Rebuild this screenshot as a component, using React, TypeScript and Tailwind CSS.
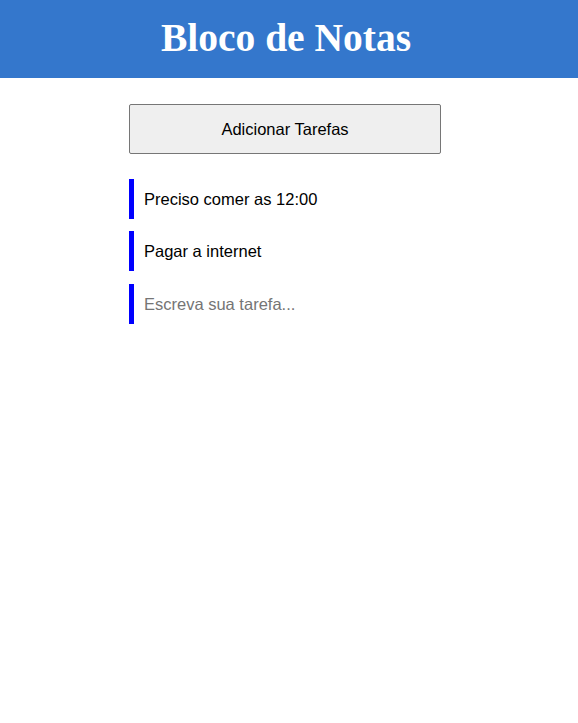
import { useState } from "react";

const tasks = ["Preciso comer as 12:00", "Pagar a internet"];

export default function App() {
    const [text, setText] = useState("");

    return <div className="min-h-screen bg-white font-['Liberation_Sans',Arial,sans-serif]">
        <header className="h-[78px] bg-[#3477cc] flex items-center justify-center">
            <h1 className="text-[39.5px] leading-none font-bold text-white font-['Liberation_Serif','Times_New_Roman',serif] -translate-x-[3px]">
                Bloco de Notas
            </h1>
        </header>
        <main className="ml-[129px] w-[312px] pt-[26px] flex flex-col">
            <button className="h-[50px] w-full bg-[#efefef] border border-[#767676] rounded-[2px] text-[16.5px] text-black">
                Adicionar Tarefas
            </button>
            <div className="mt-[25px] flex flex-col">
                {tasks.map((t) => <div key={t} className="h-[40px] mb-[12px] border-l-[5px] border-[#0000ff] pl-[10px] flex items-center text-[16.5px] text-black">
                    {t}
                </div>)}
                <input
                    value={text}
                    onChange={(e) => setText(e.target.value)}
                    placeholder="Escreva sua tarefa..."
                    className="mt-px h-[40px] border-l-[5px] border-[#0000ff] pl-[10px] text-[16.5px] text-black placeholder:text-[#757575] outline-none"
                />
            </div>
        </main>
    </div>
}
